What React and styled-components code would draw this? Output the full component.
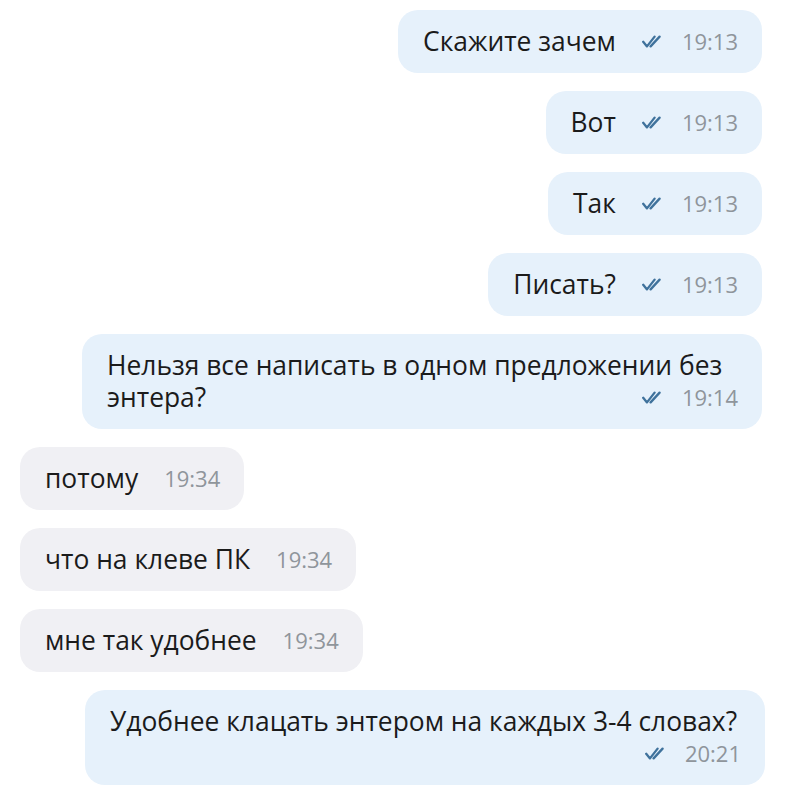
import React from "react";
import styled, { createGlobalStyle } from "styled-components";

const Global = createGlobalStyle`
  html, body { margin: 0; padding: 0; background: #ffffff; }
  body { font-family: "Open Sans", "Noto Sans", sans-serif; }
`;

const Chat = styled.div`
  width: 792px;
  height: 800px;
  box-sizing: border-box;
  padding: 10px 30px 0 20px;
  display: flex;
  flex-direction: column;
  gap: 18px;
  overflow: hidden;
`;

const Row = styled.div`
  display: flex;
  justify-content: ${(p) => (p.$out ? "flex-end" : "flex-start")};
  margin-right: ${(p) => p.$shift || 0}px;
`;

const Bubble = styled.div`
  max-width: 680px;
  box-sizing: border-box;
  padding: 15px 24px 16px 25px;
  border-radius: 20px;
  background: ${(p) => (p.$out ? "#e6f1fb" : "#f0f0f4")};
  color: #1b1b1b;
  font-size: 26.4px;
  line-height: 32px;
`;

const Meta = styled.span`
  float: right;
  display: inline-flex;
  align-items: center;
  gap: 21px;
  height: 32px;
  margin-left: 26px;
  font-size: 22px;
  color: #8f959b;
`;

const Check = () => (
  <svg width="19" height="13" viewBox="0 0 19 13" fill="none">
    <path
      d="M1.2 6.8 L5 11.4 L12.6 1.6 M8.6 11.4 L17.6 1.6"
      stroke="#3f729c"
      strokeWidth="2.3"
      strokeLinecap="round"
      strokeLinejoin="round"
    />
  </svg>
);

const messages = [
  { out: true, text: "Скажите зачем", time: "19:13" },
  { out: true, text: "Вот", time: "19:13" },
  { out: true, text: "Так", time: "19:13" },
  { out: true, text: "Писать?", time: "19:13" },
  { out: true, text: "Нельзя все написать в одном предложении без энтера?", time: "19:14" },
  { out: false, text: "потому", time: "19:34" },
  { out: false, text: "что на клеве ПК", time: "19:34" },
  { out: false, text: "мне так удобнее", time: "19:34" },
  { out: true, text: "Удобнее клацать энтером на каждых 3-4 словах?", time: "20:21", shift: -3 },
];

export default function App() {
  return (
    <>
      <Global />
      <Chat>
        {messages.map((m, i) => (
          <Row key={i} $out={m.out} $shift={m.shift}>
            <Bubble $out={m.out}>
              <span>{m.text}</span>
              <Meta>
                {m.out && <Check />}
                <span>{m.time}</span>
              </Meta>
            </Bubble>
          </Row>
        ))}
      </Chat>
    </>
  );
}
